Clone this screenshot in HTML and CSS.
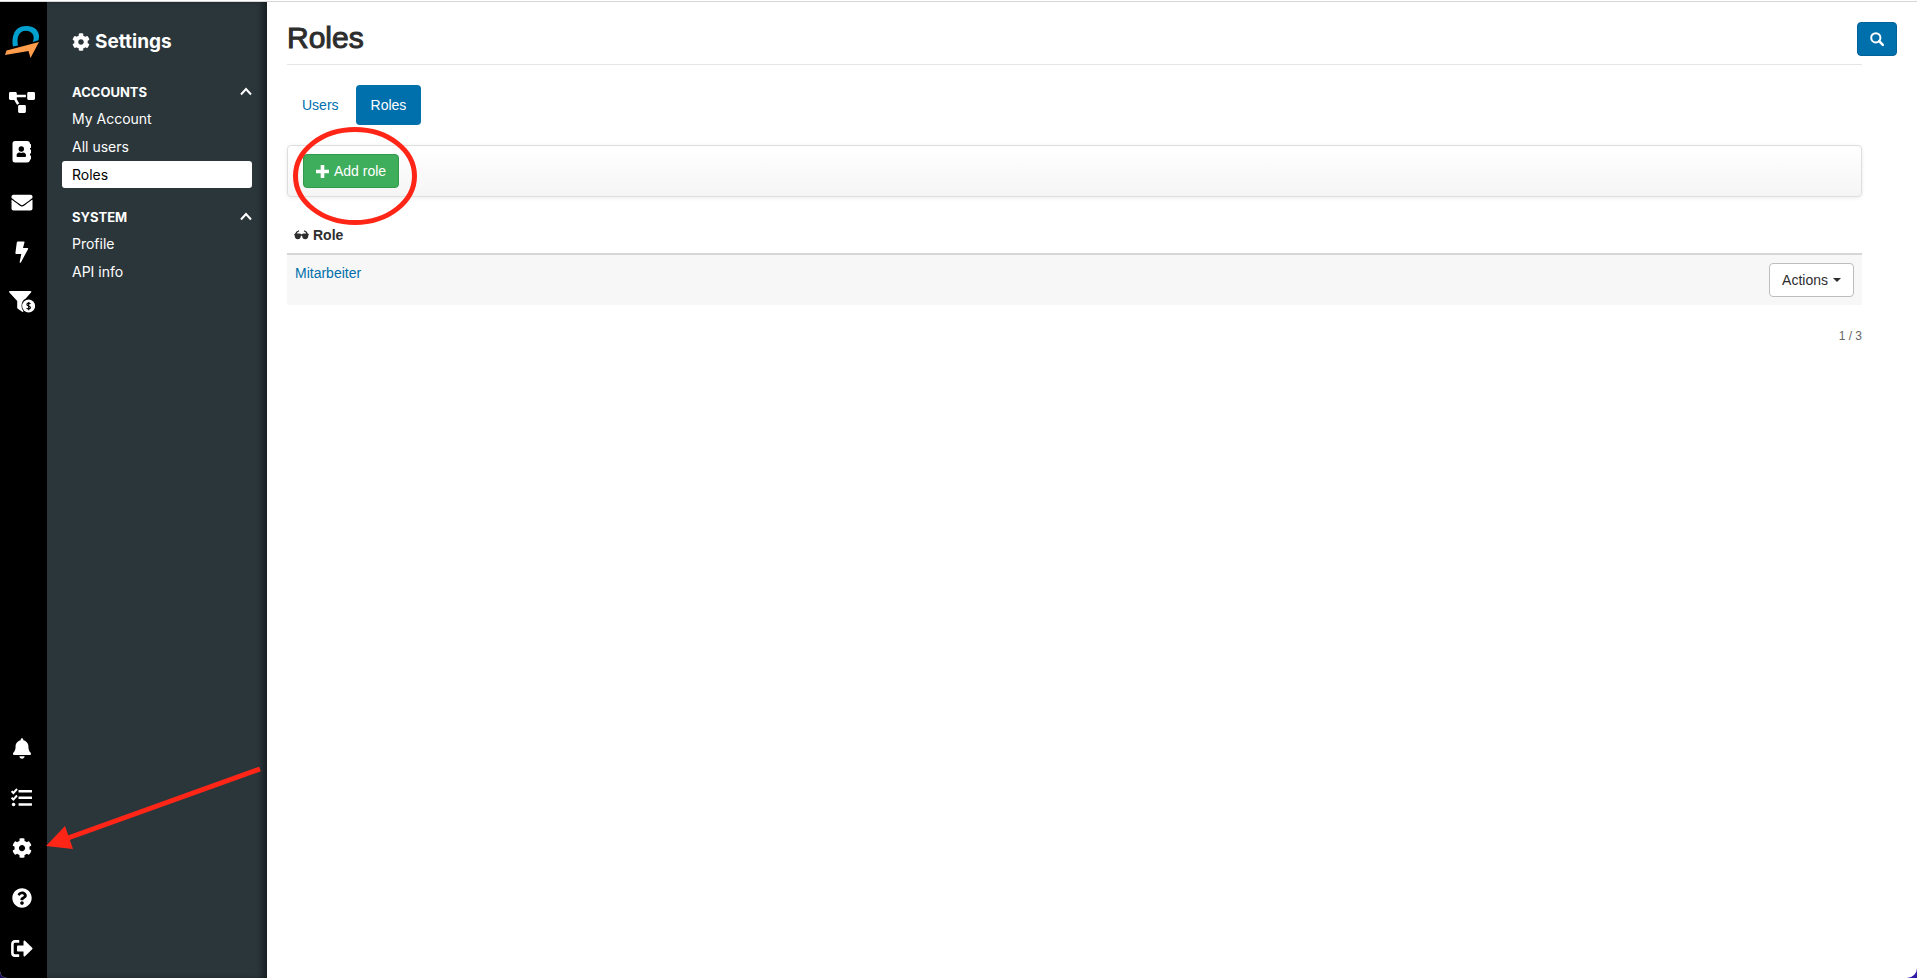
FILE: index.html
```html
<!DOCTYPE html>
<html lang="en">
<head>
<meta charset="utf-8">
<title>Roles</title>
<link rel="stylesheet" href="styles.css">
</head>
<body>
<div class="app">
  <nav class="rail" aria-label="Main">
    <a class="logo" href="#" aria-label="Home">
      <svg width="36" height="34" viewBox="0 0 36 34"><path d="M13 21.500 L8 22.500 C6.500 14 8.500 2 21 2 C33 2 35.500 11 33.500 16.200 L27.800 18 C30.500 12 27 6.800 21 6.800 C13.500 6.800 11.500 14 13 21.500 Z" fill="#00a0ce"/><path d="M1.500 26.500 L34 18 L25.500 34 L23.500 27 L0 31 Z" fill="#ff9d4d"/></svg>
    </a>
    <a href="#" aria-label="Workflows"><svg width="26" height="21" viewBox="0 0 640 512"><path d="M384 320H256c-17.670 0-32 14.330-32 32v128c0 17.670 14.330 32 32 32h128c17.670 0 32-14.330 32-32V352c0-17.670-14.330-32-32-32zM192 32c0-17.670-14.330-32-32-32H32C14.330 0 0 14.330 0 32v128c0 17.670 14.330 32 32 32h95.720l73.160 128.040C211.980 300.980 232.400 288 256 288h.28L192 175.510V128h224V64H192V32zM608 0H480c-17.670 0-32 14.330-32 32v128c0 17.670 14.330 32 32 32h128c17.670 0 32-14.330 32-32V32c0-17.670-14.330-32-32-32z"/></svg></a>
    <a href="#" aria-label="Contacts"><svg width="20" height="22" viewBox="0 0 20 22"><path fill-rule="evenodd" d="M3 0H15Q18 0 18 3H18.500Q19 3 19 3.500V6.500Q19 7 18.500 7H18V8.500H18.500Q19 8.500 19 9V12Q19 12.500 18.500 12.500H18V14.500H18.500Q19 14.500 19 15V18Q19 18.500 18.500 18.500H18Q18 21.500 15 21.500H3Q.5 21.500 .5 19V2.500Q.5 0 3 0ZM9.300 5.300A2.700 2.700 0 1 0 9.300 10.700A2.700 2.700 0 1 0 9.300 5.300ZM7.500 11.600Q4.600 12 4.600 14.400V15Q4.600 16 5.500 16H13Q14 16 14 15V14.400Q14 12 11 11.600Q9.300 12.400 7.500 11.600Z"/></svg></a>
    <a href="#" aria-label="Mail"><svg width="22" height="21" viewBox="0 0 512 512"><path d="M502.300 190.800c3.900-3.100 9.700-.2 9.700 4.700V400c0 26.500-21.500 48-48 48H48c-26.500 0-48-21.500-48-48V195.600c0-5 5.700-7.800 9.700-4.700 22.400 17.400 52.100 39.500 154.100 113.600 21.100 15.400 56.700 47.800 92.200 47.600 35.700.3 72-32.800 92.300-47.600 102-74.100 131.600-96.300 154-113.700zM256 320c23.200.4 56.600-29.200 73.400-41.400 132.700-96.300 142.800-104.700 173.400-128.700 5.800-4.500 9.200-11.500 9.200-18.900v-19c0-26.500-21.500-48-48-48H48c-26.500 0-48 21.500-48 48v19c0 7.400 3.400 14.300 9.200 18.900 30.600 23.900 40.700 32.400 173.400 128.700 16.800 12.200 50.200 41.800 73.400 41.400z"/></svg></a>
    <a href="#" aria-label="Automation"><svg width="14" height="22" viewBox="0 0 14 22"><path d="M3 .4H8.800Q9.800 .4 9.500 1.300L8 7H12.500Q13.700 7 13 8.200L6 21.200Q5.300 22.200 4.600 21.200L6.300 13H1.300Q.3 13 .4 12L1.800 1.400Q2 .4 3 .4Z"/></svg></a>
    <a href="#" aria-label="Sales funnel"><svg width="26" height="22" viewBox="0 0 26 22"><path d="M1 0H21.300Q23 0 22 1.500L16.500 7.800C12.500 9.500 11 16 14.500 20Q14 21.500 12.800 20.600L8.800 17.800Q8.200 17.300 8.200 16.500V10L.4 1.600Q-.5 0 1 0Z"/><circle cx="19.600" cy="15" r="6.500"/><path d="M21.500 12.800C20.500 11.900 17.900 11.800 17.900 13.400C17.900 15.300 21.500 14.600 21.500 16.600C21.500 18.300 18.700 18.100 17.600 17.200M19.700 11V19.200" fill="none" stroke="#000" stroke-width="1.200"/></svg></a>
    <a class="push" href="#" aria-label="Notifications"><svg width="18" height="21" viewBox="0 0 448 512"><path d="M224 512c35.320 0 63.970-28.650 63.970-64H160.030c0 35.350 28.650 64 63.970 64zm215.390-149.710c-19.320-20.760-55.470-51.990-55.470-154.290 0-77.700-54.480-139.900-127.940-155.160V32c0-17.670-14.320-32-31.980-32s-31.980 14.330-31.980 32v20.840C118.560 68.100 64.080 130.300 64.080 208c0 102.300-36.150 133.530-55.470 154.290-6 6.450-8.660 14.160-8.610 21.710.11 16.400 12.980 32 32.100 32h383.800c19.120 0 32-15.600 32.100-32 .05-7.550-2.610-15.270-8.610-21.710z"/></svg></a>
    <a href="#" aria-label="Tasks"><svg width="22" height="20" viewBox="0 0 22 20"><path d="M.6 3.200L2.400 5L6 1M.6 9.700L2.400 11.500L6 7.500" fill="none" stroke="#fff" stroke-width="1.900"/><circle cx="2.600" cy="16.500" r="1.800"/><rect x="7.500" y="2" width="13.500" height="2.500" rx=".6"/><rect x="7.500" y="8.500" width="13.500" height="2.500" rx=".6"/><rect x="7.500" y="15.200" width="13.500" height="2.500" rx=".6"/></svg></a>
    <a href="#" aria-label="Settings"><svg width="20" height="20" viewBox="0 0 512 512"><path id="cog" d="M487.400 315.700l-42.600-24.600c4.300-23.200 4.300-47 0-70.200l42.600-24.600c4.900-2.800 7.100-8.600 5.500-14-11.100-35.600-30-67.800-54.700-94.600-3.800-4.100-10-5.100-14.800-2.300L380.800 110c-17.900-15.400-38.500-27.300-60.800-35.100V25.800c0-5.600-3.900-10.500-9.400-11.700-36.700-8.200-74.300-7.800-109.200 0-5.500 1.200-9.400 6.100-9.400 11.700V75c-22.200 7.900-42.800 19.800-60.800 35.100L88.700 85.500c-4.900-2.800-11-1.900-14.800 2.300-24.700 26.700-43.600 58.900-54.700 94.600-1.700 5.400.6 11.200 5.500 14L67.300 221c-4.300 23.200-4.300 47 0 70.200l-42.600 24.600c-4.900 2.800-7.100 8.600-5.500 14 11.100 35.600 30 67.800 54.700 94.600 3.800 4.100 10 5.100 14.800 2.300l42.600-24.600c17.900 15.400 38.500 27.300 60.800 35.100v49.200c0 5.600 3.900 10.500 9.400 11.700 36.700 8.200 74.300 7.800 109.200 0 5.500-1.200 9.400-6.100 9.400-11.700v-49.200c22.200-7.900 42.800-19.800 60.800-35.100l42.600 24.600c4.900 2.800 11 1.900 14.800-2.300 24.700-26.700 43.600-58.900 54.700-94.600 1.500-5.500-.7-11.300-5.600-14.100zM256 336c-44.100 0-80-35.900-80-80s35.900-80 80-80 80 35.900 80 80-35.900 80-80 80z"/></svg></a>
    <a href="#" aria-label="Help"><svg width="20" height="20" viewBox="0 0 512 512"><path d="M504 256c0 136.997-111.043 248-248 248S8 392.997 8 256C8 119.083 119.043 8 256 8s248 111.083 248 248zM262.655 90c-54.497 0-89.255 22.957-116.549 63.758-3.536 5.286-2.353 12.415 2.715 16.258l34.699 26.310c5.205 3.947 12.621 3.008 16.665-2.122 17.864-22.658 30.113-35.797 57.303-35.797 20.429 0 45.698 13.148 45.698 32.958 0 14.976-12.363 22.667-32.534 33.976C247.128 238.528 216 254.941 216 296v4c0 6.627 5.373 12 12 12h56c6.627 0 12-5.373 12-12v-1.333c0-28.462 83.186-29.647 83.186-106.667 0-58.002-60.165-102-116.531-102zM256 338c-25.365 0-46 20.635-46 46 0 25.364 20.635 46 46 46s46-20.636 46-46c0-25.365-20.635-46-46-46z"/></svg></a>
    <a href="#" aria-label="Log out"><svg width="22" height="17" viewBox="0 0 22 17"><path d="M8.200 1.400H4Q1.400 1.400 1.400 4V13Q1.400 15.600 4 15.600H8.200" fill="none" stroke="#fff" stroke-width="2.600"/><path d="M7 5.500H12.500V1.500Q12.700 0 14 .7L21.200 7.700Q21.900 8.500 21.200 9.300L14 16.300Q12.700 17 12.500 15.500V11.500H7Q6 11.500 6 10.500V6.500Q6 5.500 7 5.500Z"/></svg></a>
  </nav>

  <aside class="sidebar">
    <h2 class="sidebar-title"><svg width="18" height="18" viewBox="0 0 512 512"><use href="#cog"/></svg>Settings</h2>
    <section class="group">
      <button class="group-head" type="button">ACCOUNTS<svg width="12" height="9" viewBox="0 0 12 9"><path d="M1 7.500L6 2L11 7.500"/></svg></button>
      <a class="item" href="#">My Account</a>
      <a class="item" href="#">All users</a>
      <a class="item current" href="#">Roles</a>
    </section>
    <section class="group">
      <button class="group-head" type="button">SYSTEM<svg width="12" height="9" viewBox="0 0 12 9"><path d="M1 7.500L6 2L11 7.500"/></svg></button>
      <a class="item" href="#">Profile</a>
      <a class="item" href="#">API info</a>
    </section>
  </aside>

  <main class="main">
    <header class="page-head">
      <h1>Roles</h1>
      <button class="search" type="button" aria-label="Search"><svg width="14" height="14" viewBox="0 0 14 14"><circle cx="5.800" cy="5.800" r="4.600" fill="none" stroke="#fff" stroke-width="2"/><path d="M9.200 9.200L12.800 12.800" stroke="#fff" stroke-width="2.600" stroke-linecap="round"/></svg></button>
    </header>
    <div class="content">
      <nav class="tabs" aria-label="Accounts">
        <a href="#">Users</a>
        <a class="active" href="#">Roles</a>
      </nav>
      <div class="toolbar">
        <button class="add" type="button"><svg width="13" height="13" viewBox="0 0 13 13"><path d="M6.500 0V13M0 6.500H13" stroke="#fff" stroke-width="3.600"/></svg>Add role</button>
        <svg class="ring" width="124" height="98" viewBox="0 0 124 98" aria-hidden="true"><ellipse cx="62" cy="49" rx="59.500" ry="46.500"/></svg>
      </div>
      <table class="roles">
        <thead><tr><th scope="col" colspan="2"><span class="th"><svg width="15" height="10" viewBox="0 0 15 10"><path d="M0 4.500L1.200 3.500Q2 1 4.800 .3L5.300 1.300Q3.200 2 2.700 3.600H5.500Q6.700 3.600 7 4.300H8Q8.300 3.600 9.500 3.600H12.300Q11.800 2 9.700 1.300L10.200 .3Q13 1 13.800 3.500L15 4.500L14.300 5.500Q14.200 9.300 11.200 9.300Q8.400 9.300 8.100 5.700H6.900Q6.600 9.300 3.800 9.300Q.8 9.300 .7 5.500Z" fill="#2d2d2d"/></svg>Role</span></th></tr></thead>
        <tbody><tr><td><a href="#">Mitarbeiter</a></td><td class="act"><button class="actions" type="button">Actions<span class="caret"></span></button></td></tr></tbody>
      </table>
      <p class="pager">1 / 3</p>
    </div>
  </main>
  <svg class="arrow" width="216" height="84" viewBox="0 0 216 84" aria-hidden="true"><path d="M214 3L22 72" stroke="#ff2618" stroke-width="5"/><path d="M0 80L19 60L27 83Z" fill="#ff2618"/></svg>
</div>
</body>
</html>
```

FILE: styles.css
```css
* { box-sizing: border-box; }

html { background: linear-gradient(90deg, #1c0a5c 50%, #2e1ba6 50%); }

body {
  margin: 0;
  font: 14px/20px "Liberation Sans", Arial, sans-serif;
  color: #2d2d2d;
}

a { color: #0070ac; text-decoration: none; }
button { font: inherit; margin: 0; cursor: pointer; }
svg { display: block; flex: none; }

.app {
  position: relative;
  display: flex;
  min-height: 100vh;
  overflow: hidden;
  background: #fff;
  border-radius: 0 0 10px 7px;
  padding-top: 1px;
}
.app::before {
  content: "";
  position: absolute;
  top: 1px;
  left: 0;
  right: 0;
  height: 1px;
  background: #d6d6d6;
}

.rail {
  display: flex;
  flex-direction: column;
  flex: none;
  width: 47px;
  margin-top: 1px;
  padding: 22px 3px 5px 0;
  background: #000;
}
.rail a {
  display: flex;
  align-items: center;
  justify-content: center;
  height: 50px;
}
.rail svg { fill: #fff; }
.rail .logo {
  justify-content: flex-end;
  height: 34px;
  padding-right: 3px;
  margin-bottom: 19px;
}
.rail .push { margin-top: auto; }

.sidebar {
  flex: none;
  width: 220px;
  margin-top: 1px;
  padding: 26px 15px;
  background: #2b363b;
  box-shadow: inset -6px 0 6px -2px #181e21;
  font-family: Inter, "Open Sans", sans-serif;
  font-size: 14px;
  color: #fff;
}
.sidebar-title {
  display: flex;
  align-items: center;
  gap: 5px;
  margin: 0 0 22px;
  padding-left: 10px;
  font-size: 19px;
  line-height: 28px;
  font-weight: 700;
}
.sidebar-title svg { fill: #fff; }
.group { margin-bottom: 15px; }
.group-head {
  display: flex;
  align-items: center;
  justify-content: space-between;
  width: 100%;
  height: 27px;
  padding: 0 0 0 10px;
  border: 0;
  background: none;
  color: #fff;
  font-size: 13px;
  font-weight: 700;
}
.group-head path { fill: none; stroke: #fff; stroke-width: 2; }
.item {
  display: block;
  margin-bottom: 1px;
  padding: 0 10px;
  line-height: 27px;
  border-radius: 3px;
  color: #fff;
}
.item.current { background: #fff; color: #000; }

.main {
  flex: 1;
  min-width: 0;
  padding: 21px 20px;
}
.page-head {
  display: flex;
  align-items: flex-start;
  justify-content: space-between;
  margin-bottom: 8px;
}
h1 {
  margin: 0;
  font-size: 30px;
  line-height: 32px;
  font-weight: 400;
  -webkit-text-stroke: 1px #2d2d2d;
}
.search {
  display: flex;
  align-items: center;
  justify-content: center;
  width: 40px;
  height: 34px;
  padding: 0;
  background: #0070ac;
  border: 1px solid #00629a;
  border-radius: 4px;
}

.content {
  margin-right: 35px;
  padding-top: 20px;
  border-top: 1px solid #e6e6e6;
}
.tabs { display: flex; gap: 2px; margin-bottom: 20px; }
.tabs a { padding: 10px 15px; border-radius: 4px; }
.tabs .active { background: #0070ac; color: #fff; }

.toolbar {
  position: relative;
  display: flex;
  margin-bottom: 20px;
  padding: 8px 15px;
  border: 1px solid #dedede;
  border-radius: 4px;
  background: linear-gradient(#fff, #f5f5f5);
  box-shadow: 0 1px 4px rgba(0, 0, 0, .08);
}
.add {
  display: flex;
  align-items: center;
  gap: 5px;
  padding: 6px 12px;
  border: 1px solid #2f9a4c;
  border-radius: 4px;
  background: #3fae5c;
  color: #fff;
}
.ring {
  position: absolute;
  left: 5px;
  top: -19px;
  pointer-events: none;
}
.ring ellipse { fill: none; stroke: #ff2618; stroke-width: 5; }

.roles { width: 100%; border-collapse: separate; border-spacing: 0; }
.roles th {
  padding: 8px 7px;
  border-bottom: 2px solid #d6d6d6;
  text-align: left;
}
.th { display: flex; align-items: center; gap: 4px; }
.roles td {
  padding: 8px;
  vertical-align: top;
  background: #f7f7f7;
}
.act { text-align: right; }
.actions {
  display: inline-flex;
  align-items: center;
  gap: 5px;
  padding: 6px 12px;
  border: 1px solid #bdbdbd;
  border-radius: 4px;
  background: #fff;
  color: #2d2d2d;
  vertical-align: top;
}
.caret {
  border: 4px solid transparent;
  border-top-color: #2d2d2d;
  border-bottom: 0;
}
.pager {
  margin: 21px 0 0;
  text-align: right;
  font-size: 12px;
  color: #666;
}

.arrow {
  position: absolute;
  left: 46px;
  bottom: 128px;
  pointer-events: none;
}
```
